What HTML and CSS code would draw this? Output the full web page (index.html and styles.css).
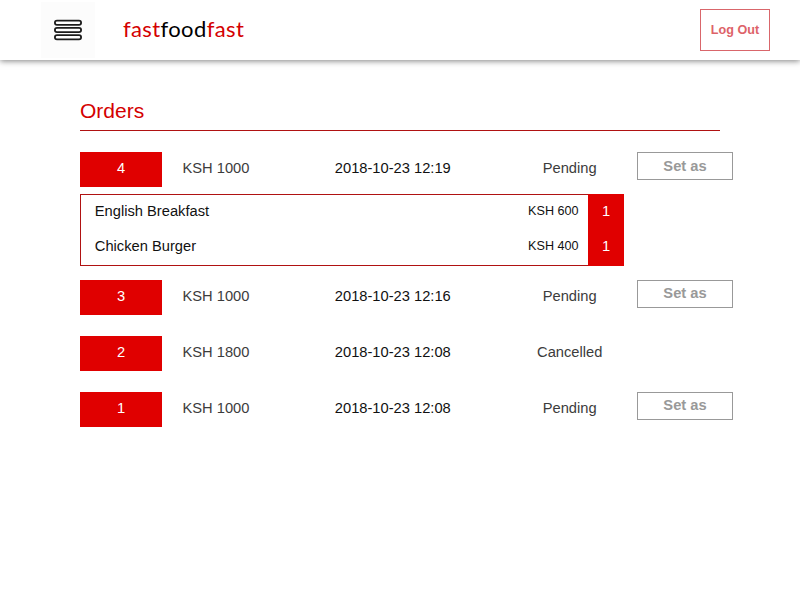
FILE: index.html
```html
<!DOCTYPE html>
<html lang="en">
<head>
<meta charset="utf-8">
<title>fastfoodfast</title>
<link rel="stylesheet" href="styles.css">
</head>
<body>
<header class="topbar">
  <div class="menu">
    <svg width="30" height="24" viewBox="0 0 30 24" fill="#fff" stroke="#1c1c1c" stroke-width="1.8">
      <rect x="1.9" y="2.6" width="26.2" height="4.2" rx="2.1"/>
      <rect x="1.9" y="9.9" width="26.2" height="4.2" rx="2.1"/>
      <rect x="1.9" y="17.2" width="26.2" height="4.2" rx="2.1"/>
    </svg>
  </div>
  <div class="logo">fast<span>food</span>fast</div>
  <button class="logout">Log Out</button>
</header>
<main class="page">
  <h1>Orders</h1>
  <div class="order">
    <div class="num">4</div><div class="total">KSH 1000</div><div class="date">2018-10-23 12:19</div><div class="status">Pending</div><button class="set low">Set as</button>
  </div>
  <div class="details">
    <div class="item"><span class="name">English Breakfast</span><span class="price">KSH 600</span><span class="qty">1</span></div>
    <div class="item"><span class="name">Chicken Burger</span><span class="price">KSH 400</span><span class="qty">1</span></div>
  </div>
  <div class="order">
    <div class="num">3</div><div class="total">KSH 1000</div><div class="date">2018-10-23 12:16</div><div class="status">Pending</div><button class="set">Set as</button>
  </div>
  <div class="order">
    <div class="num">2</div><div class="total">KSH 1800</div><div class="date">2018-10-23 12:08</div><div class="status">Cancelled</div>
  </div>
  <div class="order">
    <div class="num">1</div><div class="total">KSH 1000</div><div class="date">2018-10-23 12:08</div><div class="status">Pending</div><button class="set">Set as</button>
  </div>
</main>
</body>
</html>
```
FILE: styles.css
```css
* { box-sizing: border-box; }
body {
  margin: 0;
  background: #fff;
  font: 14.7px/33px "Liberation Sans", Arial, sans-serif;
  color: #111;
}
button { font-family: inherit; font-weight: bold; background: #fff; padding: 0; }
.topbar {
  display: flex;
  align-items: center;
  height: 60px;
  padding: 0 30px 0 41px;
  box-shadow: 0 1px 6px rgba(0, 0, 0, .5);
}
.menu {
  display: flex;
  align-items: center;
  justify-content: center;
  width: 54px;
  height: 56px;
  background: #fcfcfc;
}
.logo {
  margin-left: 28px;
  padding-bottom: 2px;
  font: 22px/30px Lato, "Open Sans", sans-serif;
  letter-spacing: .38px;
  color: #d40000;
}
.logo span { color: #000; }
.logout {
  margin-left: auto;
  width: 70px;
  height: 42px;
  border: 1px solid #d9666b;
  color: #dd6268;
  font-size: 12.6px;
}
.page { padding: 35px 67px 0 80px; }
h1 {
  margin: 0 13px 21px 0;
  height: 36px;
  border-bottom: 1px solid #b01212;
  font-size: 21px;
  font-weight: normal;
  line-height: 32px;
  color: #d40000;
}
.order {
  display: grid;
  grid-template-columns: 82px 153px 153px 163px 6px 96px;
  height: 35px;
  margin-bottom: 21px;
}
.num { background: #e00000; color: #fff; text-align: center; }
.total { padding-left: 20.5px; color: #3c3c3c; }
.date { padding-left: 19.8px; }
.status { text-align: center; padding-left: 40.4px; color: #3c3c3c; }
.set {
  grid-column: 6;
  height: 28px;
  padding-bottom: 2px;
  border: 1px solid #999;
  color: #999;
  font-size: 14.7px;
}
.low { padding-bottom: 0; }
.details {
  width: 544px;
  height: 72px;
  margin: -14px 0 14px;
  border: 1px solid #b01212;
  border-right: 0;
}
.item { display: flex; height: 35px; padding-left: 13.8px; }
.name { flex: 1; }
.price { padding-right: 9.5px; font-size: 12.6px; }
.qty { width: 36px; background: #e00000; color: #fff; text-align: center; box-shadow: 0 -1px #e00000, 0 1px #e00000; }
```
